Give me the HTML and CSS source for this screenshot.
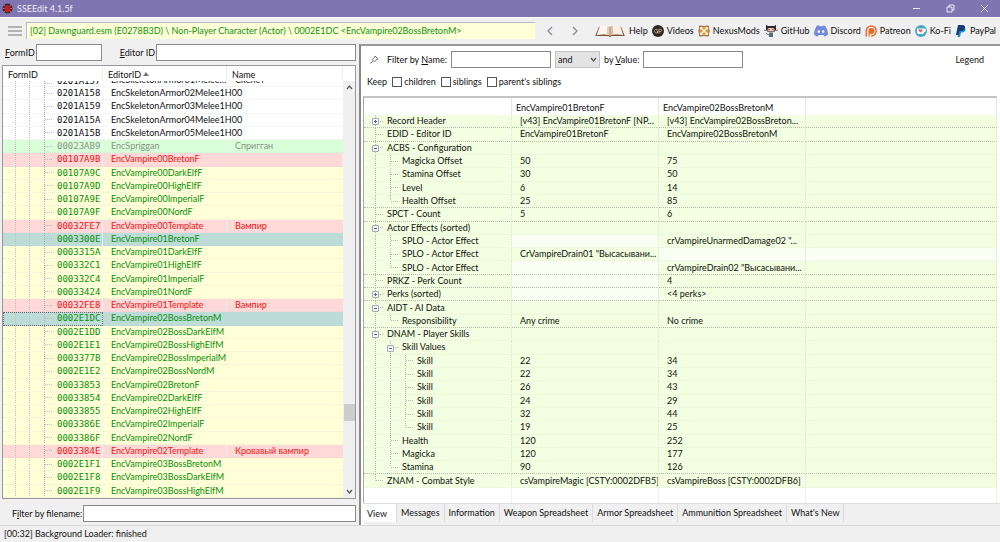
FILE: index.html
```html
<!DOCTYPE html>
<html lang="en">
<head>
<meta charset="utf-8">
<title>SSEEdit 4.1.5f</title>
<link rel="stylesheet" href="styles.css">
</head>
<body>
<header class="titlebar">
  <svg class="app-icon" viewBox="0 0 12 12"><circle cx="6" cy="6" r="5.5" fill="#3a2a30"/><path d="M2 2l2 2M10 2L8 4M1 6h2M11 6H9M2 10l2-2M10 10L8 8" stroke="#b9a5a5" stroke-width=".8"/><path d="M6 2l2 1.500 1 2.500-1 3-2 1.500L4 9 3 6l1-2.500z" fill="#d8141c"/></svg>
  <span class="app-title">SSEEdit 4.1.5f</span>
  <div class="win-buttons">
    <button aria-label="Minimize"><svg viewBox="0 0 9 9"><path d="M1 4.500h7"/></svg></button>
    <button aria-label="Restore"><svg viewBox="0 0 9 9"><path d="M1 3h5v5H1zM3 3V1h5v5H6"/></svg></button>
    <button aria-label="Close"><svg viewBox="0 0 9 9"><path d="M1 1l7 7M8 1L1 8"/></svg></button>
  </div>
</header>

<nav class="toolbar">
  <button class="menu" aria-label="Menu"><svg viewBox="0 0 14 10"><path d="M0 1h14M0 5h14M0 9h14" stroke="#777" stroke-width="1.200"/></svg></button>
  <input class="path" aria-label="Path" readonly value="[02] Dawnguard.esm (E0278B3D) \ Non-Player Character (Actor) \ 0002E1DC &lt;EncVampire02BossBretonM&gt;">
  <div class="history">
    <button aria-label="Back"><svg viewBox="0 0 6 10"><path d="M5 1L1 5l4 4"/></svg></button>
    <button aria-label="Forward"><svg viewBox="0 0 6 10"><path d="M1 1l4 4-4 4"/></svg></button>
  </div>
  <div class="links">
    <a href="#"><svg class="book" viewBox="0 0 32 13"><path d="M4 2L0 12h14l2 1 2-1h14L28 2z" fill="#7d5138"/><path d="M5 1c4-1.200 8-1 11 1v9.500C12 10 6 10 1.500 11z" fill="#fbf5ee"/><path d="M27 1c-4-1.200-8-1-11 1v9.500c4-1.500 10-1.500 14.500-.5z" fill="#f7eee4"/><path d="M13 .8c1.500.2 2.300.6 3 1.200v9.500c-1-.6-2-.9-3.500-1z" fill="#e3cdb9"/><path d="M19 .8c-1.500.2-2.300.6-3 1.200v9.500c1-.6 2-.9 3.500-1z" fill="#d9bfa8"/><path d="M16 2v10" stroke="#a98468" stroke-width=".8"/></svg>Help</a>
    <a href="#"><svg viewBox="0 0 12 12"><circle cx="6" cy="6" r="6" fill="#2f2925"/><path d="M5.500 4.300H3.800L2.500 5.500v1.200l1.200 1.200h1.800V6H4.400M7 8.500V4.200h1.800l.9.900v.7l-.9.900H7" fill="none" stroke="#c3b48c" stroke-width=".9"/></svg>Videos</a>
    <a href="#"><svg viewBox="0 0 12 12"><path d="M1 1l2-.5L6 1l3-.5 2 .5v2l.5 3-.5 3v2l-2 .5-3-.5-3 .5-2-.5V9L.5 6 1 3z" fill="#6f6254"/><rect x="1.500" y="1.500" width="9" height="9" rx="1.500" fill="#eb962f"/><path d="M3 3l6 6M9 3L3 9" stroke="#fff" stroke-width="1.400"/><path d="M2.300 4.500V2.300h2.200M7.500 2.300h2.200v2.200M9.700 7.500v2.200H7.500M4.500 9.700H2.300V7.500" fill="none" stroke="#fff" stroke-width=".8"/></svg>NexusMods</a>
    <a href="#"><svg class="wide" viewBox="0 0 14 12"><path d="M2 0l2 1h6l2-1v5l-2 2H4L2 5z" fill="#2b2b2d"/><rect x="3.500" y="3" width="7" height="3.500" rx="1.500" fill="#e9c3ae"/><path d="M5 4v1.200M9 4v1.200" stroke="#5d3b34"/><path d="M5 7.500h4V12H5z" fill="#566f7b"/><path d="M5 10L3 9 2 8M0 5l2 .5M14 5l-2 .5" fill="none" stroke="#777"/></svg>GitHub</a>
    <a href="#"><svg class="wide" viewBox="0 0 14 11"><path d="M3 0l2-.1.500.9h3L9 0l2 .3C13 3 14 6 14 9c-1 1-2 1.600-3.500 2l-1-1.500h-5L3.500 11C2 10.600 1 10 0 9 0 6 1 3 3 0z" fill="#7289da"/><ellipse cx="4.800" cy="6" rx="1.300" ry="1.500" fill="#f0f0f0"/><ellipse cx="9.200" cy="6" rx="1.300" ry="1.500" fill="#f0f0f0"/></svg>Discord</a>
    <a href="#"><svg viewBox="0 0 12 12"><path d="M1.200 11.500V6a5 5 0 1 1 5 5" fill="none" stroke="#f4621f" stroke-width="1.400"/><path d="M3.500 11.500V6a2.900 2.900 0 1 1 2.900 2.900L4.700 8.400v3.100z" fill="#f4621f"/></svg>Patreon</a>
    <a href="#"><svg viewBox="0 0 12 12"><circle cx="6" cy="6" r="6" fill="#4aa7c4"/><path d="M2 3.500h7.500c2 0 2 3.500-.2 3.500-.3 1.500-1 2-2 2H4C2.500 9 2 8 2 7z" fill="#fff"/><path d="M5.500 7.500L3.600 5.700c-.8-1.500 1.200-2 1.900-.8.700-1.200 2.700-.7 1.900.8z" fill="#f1545b"/></svg>Ko-Fi</a>
    <a href="#"><svg viewBox="0 0 12 12"><path d="M4 2h5c2.500 1 2 5.500-2 5.500H6L5 12H2.500z" fill="#1b93d2"/><path d="M3 0h4.500c4 0 3.300 6-1.200 6H4.500l-.9 4H1z" fill="#173a78"/></svg>PayPal</a>
  </div>
</nav>

<main class="panes">
  <section class="left">
    <form class="search">
      <label for="formid"><u>F</u>ormID</label><input id="formid" class="box formid" type="text">
      <label for="edid" class="edid-label"><u>E</u>ditor ID</label><input id="edid" class="box grow" type="text">
    </form>
    <div class="records">
      <table class="list">
        <colgroup><col class="c-id"><col class="c-edid"><col></colgroup>
        <thead><tr><th>FormID</th><th>EditorID <svg class="sort" viewBox="0 0 6 4"><path d="M0 4l3-4 3 4z" fill="#777"/></svg></th><th>Name</th></tr></thead>
        <tbody>
          <tr class="cut"><td><div>0201A157</div></td><td><div>EncSkeletonArmor01Melee…</div></td><td><div>Скелет</div></td></tr>
          <tr><td>0201A158</td><td colspan="2">EncSkeletonArmor02Melee1H00</td></tr>
          <tr><td>0201A159</td><td colspan="2">EncSkeletonArmor03Melee1H00</td></tr>
          <tr><td>0201A15A</td><td colspan="2">EncSkeletonArmor04Melee1H00</td></tr>
          <tr><td>0201A15B</td><td colspan="2">EncSkeletonArmor05Melee1H00</td></tr>
          <tr class="added"><td>00023AB9</td><td>EncSpriggan</td><td>Спригган</td></tr>
          <tr class="conflict"><td>00107A9B</td><td colspan="2">EncVampire00BretonF</td></tr>
          <tr class="over"><td>00107A9C</td><td colspan="2">EncVampire00DarkElfF</td></tr>
          <tr class="over"><td>00107A9D</td><td colspan="2">EncVampire00HighElfF</td></tr>
          <tr class="over"><td>00107A9E</td><td colspan="2">EncVampire00ImperialF</td></tr>
          <tr class="over"><td>00107A9F</td><td colspan="2">EncVampire00NordF</td></tr>
          <tr class="conflict"><td>00032FE7</td><td>EncVampire00Template</td><td>Вампир</td></tr>
          <tr class="over picked"><td>0003300E</td><td colspan="2">EncVampire01BretonF</td></tr>
          <tr class="over"><td>0003315A</td><td colspan="2">EncVampire01DarkElfF</td></tr>
          <tr class="over"><td>000332C1</td><td colspan="2">EncVampire01HighElfF</td></tr>
          <tr class="over"><td>000332C4</td><td colspan="2">EncVampire01ImperialF</td></tr>
          <tr class="over"><td>00033424</td><td colspan="2">EncVampire01NordF</td></tr>
          <tr class="conflict"><td>00032FE8</td><td>EncVampire01Template</td><td>Вампир</td></tr>
          <tr class="over picked focus"><td>0002E1DC</td><td colspan="2">EncVampire02BossBretonM</td></tr>
          <tr class="over"><td>0002E1DD</td><td colspan="2">EncVampire02BossDarkElfM</td></tr>
          <tr class="over"><td>0002E1E1</td><td colspan="2">EncVampire02BossHighElfM</td></tr>
          <tr class="over"><td>0003377B</td><td colspan="2">EncVampire02BossImperialM</td></tr>
          <tr class="over"><td>0002E1E2</td><td colspan="2">EncVampire02BossNordM</td></tr>
          <tr class="over"><td>00033853</td><td colspan="2">EncVampire02BretonF</td></tr>
          <tr class="over"><td>00033854</td><td colspan="2">EncVampire02DarkElfF</td></tr>
          <tr class="over"><td>00033855</td><td colspan="2">EncVampire02HighElfF</td></tr>
          <tr class="over"><td>0003386E</td><td colspan="2">EncVampire02ImperialF</td></tr>
          <tr class="over"><td>0003386F</td><td colspan="2">EncVampire02NordF</td></tr>
          <tr class="conflict"><td>0003384E</td><td>EncVampire02Template</td><td>Кровавый вампир</td></tr>
          <tr class="over"><td>0002E1F1</td><td colspan="2">EncVampire03BossBretonM</td></tr>
          <tr class="over"><td>0002E1F8</td><td colspan="2">EncVampire03BossDarkElfM</td></tr>
          <tr class="over"><td>0002E1F9</td><td colspan="2">EncVampire03BossHighElfM</td></tr>
        </tbody>
      </table>
      <div class="scrollbar">
        <svg viewBox="0 0 7 5"><path d="M1 4l2.500-3L6 4"/></svg>
        <span class="space-above"></span><span class="thumb"></span><span class="space-below"></span>
        <svg viewBox="0 0 7 5"><path d="M1 1l2.500 3L6 1"/></svg>
      </div>
    </div>
    <form class="filename">
      <label for="fname">F<u>i</u>lter by filename:</label><input id="fname" class="box grow" type="text">
    </form>
  </section>

  <section class="right">
    <form class="filters">
      <div class="filter-row">
        <svg class="pin" viewBox="0 0 9 9"><path d="M5 1l3 3-1.500.5L5 6.500 4.500 7 2 4.500 2.500 4l2-1.500zM3 6L.5 8.500" fill="none" stroke="#666" stroke-width=".9"/></svg>
        <label for="byname">Filter by <u>N</u>ame:</label><input id="byname" class="box medium" type="text">
        <span class="combo"><select aria-label="Operator"><option>and</option></select><svg viewBox="0 0 7 5"><path d="M1 1l2.500 3L6 1"/></svg></span>
        <label for="byvalue">by <u>V</u>alue:</label><input id="byvalue" class="box medium" type="text">
        <span class="legend">Legend</span>
      </div>
      <div class="keep-row">
        <span>Keep</span>
        <label><input type="checkbox">children</label>
        <label><input type="checkbox">siblings</label>
        <label><input type="checkbox">parent's siblings</label>
      </div>
    </form>
    <div class="view">
      <table class="tree">
        <colgroup><col class="c-label"><col class="c-val"><col class="c-val"><col></colgroup>
        <thead><tr><th></th><th>EncVampire01BretonF</th><th>EncVampire02BossBretonM</th><th></th></tr></thead>
        <tbody>
          <tr class="sep"><td class="l0"><button class="x plus" aria-label="Expand"></button>Record Header</td><td>[v43] EncVampire01BretonF [NP...</td><td>[v43] EncVampire02BossBreton...</td><td></td></tr>
          <tr class="sep"><td class="l0"><i class="x"></i>EDID - Editor ID</td><td>EncVampire01BretonF</td><td>EncVampire02BossBretonM</td><td></td></tr>
          <tr><td class="l0"><button class="x" aria-label="Collapse"></button>ACBS - Configuration</td><td></td><td></td><td></td></tr>
          <tr><td class="l1"><i class="x"></i>Magicka Offset</td><td>50</td><td>75</td><td></td></tr>
          <tr><td class="l1"><i class="x"></i>Stamina Offset</td><td>30</td><td>50</td><td></td></tr>
          <tr><td class="l1"><i class="x"></i>Level</td><td>6</td><td>14</td><td></td></tr>
          <tr class="sep"><td class="l1 end"><i class="x"></i>Health Offset</td><td>25</td><td>85</td><td></td></tr>
          <tr class="sep"><td class="l0"><i class="x"></i>SPCT - Count</td><td>5</td><td>6</td><td></td></tr>
          <tr><td class="l0"><button class="x" aria-label="Collapse"></button>Actor Effects (sorted)</td><td></td><td></td><td></td></tr>
          <tr><td class="l1"><i class="x"></i>SPLO - Actor Effect</td><td class="none"></td><td>crVampireUnarmedDamage02 "...</td><td></td></tr>
          <tr><td class="l1"><i class="x"></i>SPLO - Actor Effect</td><td>CrVampireDrain01 "Высасывани...</td><td class="none"></td><td class="none"></td></tr>
          <tr class="sep"><td class="l1 end"><i class="x"></i>SPLO - Actor Effect</td><td class="none"></td><td>crVampireDrain02 "Высасывани...</td><td></td></tr>
          <tr class="sep"><td class="l0"><i class="x"></i>PRKZ - Perk Count</td><td class="none"></td><td>4</td><td></td></tr>
          <tr class="sep"><td class="l0"><button class="x plus" aria-label="Expand"></button>Perks (sorted)</td><td class="none"></td><td>&lt;4 perks&gt;</td><td></td></tr>
          <tr><td class="l0"><button class="x" aria-label="Collapse"></button>AIDT - AI Data</td><td></td><td></td><td></td></tr>
          <tr class="sep"><td class="l1 end"><i class="x"></i>Responsibility</td><td>Any crime</td><td>No crime</td><td></td></tr>
          <tr><td class="l0"><button class="x" aria-label="Collapse"></button>DNAM - Player Skills</td><td></td><td></td><td></td></tr>
          <tr><td class="l1"><button class="x" aria-label="Collapse"></button>Skill Values</td><td></td><td></td><td></td></tr>
          <tr><td class="l2"><i class="x"></i>Skill</td><td>22</td><td>34</td><td></td></tr>
          <tr><td class="l2"><i class="x"></i>Skill</td><td>22</td><td>34</td><td></td></tr>
          <tr><td class="l2"><i class="x"></i>Skill</td><td>26</td><td>43</td><td></td></tr>
          <tr><td class="l2"><i class="x"></i>Skill</td><td>24</td><td>29</td><td></td></tr>
          <tr><td class="l2"><i class="x"></i>Skill</td><td>32</td><td>44</td><td></td></tr>
          <tr><td class="l2 end"><i class="x"></i>Skill</td><td>19</td><td>25</td><td></td></tr>
          <tr><td class="l1"><i class="x"></i>Health</td><td>120</td><td>252</td><td></td></tr>
          <tr><td class="l1"><i class="x"></i>Magicka</td><td>120</td><td>177</td><td></td></tr>
          <tr class="sep"><td class="l1 end"><i class="x"></i>Stamina</td><td>90</td><td>126</td><td></td></tr>
          <tr><td class="l0 end"><i class="x"></i>ZNAM - Combat Style</td><td>csVampireMagic [CSTY:0002DFB5]</td><td>csVampireBoss [CSTY:0002DFB6]</td><td></td></tr>
        </tbody>
        <tfoot><tr><td></td><td></td><td></td><td></td></tr></tfoot>
      </table>
    </div>
    <div class="tabs" role="tablist">
      <button class="tab active" role="tab" aria-selected="true">View</button>
      <button class="tab" role="tab">Messages</button>
      <button class="tab" role="tab">Information</button>
      <button class="tab" role="tab">Weapon Spreadsheet</button>
      <button class="tab" role="tab">Armor Spreadsheet</button>
      <button class="tab" role="tab">Ammunition Spreadsheet</button>
      <button class="tab" role="tab">What's New</button>
    </div>
  </section>
</main>
<footer class="status">[00:32] Background Loader: finished</footer>
</body>
</html>
```
FILE: styles.css
```css
* { box-sizing: border-box; }
body {
  margin: 0;
  height: 100vh;
  display: flex;
  flex-direction: column;
  overflow: hidden;
  background: #f0f0f0;
  color: #111;
  font: 9px/12px Lato, "Open Sans", sans-serif;
}
button, input, select { font: inherit; color: inherit; margin: 0; }
button { border: 0; background: none; padding: 0; }
svg { display: block; flex: none; }
label, span, a { white-space: nowrap; }

.titlebar {
  height: 17px;
  display: flex;
  align-items: center;
  gap: 4px;
  padding: 0 11px 0 2px;
  background: #7f75b1;
  color: #eeeaf8;
}
.app-icon { width: 11px; height: 11px; }
.win-buttons { margin-left: auto; display: flex; gap: 25px; }
.win-buttons svg { width: 9px; height: 9px; fill: none; stroke: #eceaf6; stroke-width: 1; }

.toolbar {
  height: 27px;
  display: flex;
  align-items: center;
  padding: 0 4px 0 8px;
  border-top: 1px solid #fff;
}
.menu { margin-right: 4px; }
.menu svg { width: 14px; height: 10px; }
.path {
  flex: 1;
  min-width: 0;
  height: 17px;
  margin-bottom: 2px;
  padding: 0 3px;
  border: 0;
  border-top: 1px solid #bbb;
  border-left: 1px solid #bbb;
  background: #ffffd8;
  color: #0f930f;
}
.history { display: flex; gap: 19px; padding: 0 16px 0 12px; }
.history svg { width: 6px; height: 10px; fill: none; stroke: #8a8595; stroke-width: 1.2; }
.links { display: flex; gap: 4px; }
.links a { display: flex; align-items: center; gap: 3px; color: inherit; text-decoration: none; }
.links svg { width: 12px; height: 12px; }
.links .book { width: 32px; }
.links .wide { width: 14px; }

.panes { flex: 1; min-height: 0; display: flex; }
.box {
  height: 17px;
  min-width: 0;
  padding: 0 3px;
  border: 1px solid #8a8a8a;
  border-radius: 0;
  background: #fff;
}
.grow { flex: 1; }

.left { width: 359px; flex: none; display: flex; flex-direction: column; padding: 0 3px 3px 2px; }
.search { display: flex; align-items: center; gap: 1px; padding-left: 3px; }
.formid { width: 66px; }
.edid-label { margin-left: 17px; }
.records {
  flex: 1;
  min-height: 0;
  display: flex;
  margin: 4px 0 6px;
  border: 1px solid #999;
  background: #fff;
}
table { border-collapse: separate; border-spacing: 0; table-layout: fixed; height: 100%; }
td, th { padding: 0; font-weight: normal; text-align: left; white-space: nowrap; }
.list { flex: 1; width: 0; }
.c-id { width: 100px; }
.c-edid { width: 124px; }
.list thead tr { height: 15px; }
.list th { height: 15px; padding: 2px 0 0 5px; border-right: 1px solid #eee; }
.sort { display: inline-block; width: 6px; height: 4px; vertical-align: 2px; }
.list td { padding-left: 8px; border-bottom: 1px dotted rgba(190, 200, 210, .3); }
.list td:first-child {
  padding-left: 54px;
  border-right: 1px solid rgba(255, 255, 255, .6);
  font: 9px/10px "DejaVu Sans Mono", monospace;
  background-image:
    repeating-linear-gradient(#c0c0c0 0 1px, transparent 1px 2px),
    repeating-linear-gradient(#c0c0c0 0 1px, transparent 1px 2px),
    repeating-linear-gradient(#aaa 0 1px, transparent 1px 2px),
    repeating-linear-gradient(90deg, #bbb 0 1px, transparent 1px 2px);
  background-position: 12px 0, 26px 0, 41px 0, 42px 50%;
  background-size: 1px 100%, 1px 100%, 1px 100%, 8px 1px;
  background-repeat: no-repeat;
}
.list .cut, .list .cut td { height: 6px; }
.cut div { height: 5px; display: flex; align-items: flex-end; overflow: hidden; }
.over { background: #ffffd8; color: #0a8f0a; }
.conflict { background: #ffd8d8; color: #f41414; }
.added { background: #d8ffd8; color: #8a938a; }
.conflict td:nth-child(2), .added td:nth-child(2) { border-right: 1px solid rgba(255, 255, 255, .5); }
.picked { background: #bddcd8; }
.list .focus td:first-child { outline: 1px dotted #666; outline-offset: -1px; }

.scrollbar {
  width: 12px;
  margin-top: 15px;
  display: flex;
  flex-direction: column;
  align-items: center;
  padding: 4px 0;
  background: #f0f0f0;
}
.scrollbar svg { width: 7px; height: 5px; }
.scrollbar path, .combo path { fill: none; stroke: #555; stroke-width: 1.2; }
.space-above { flex: 312; }
.space-below { flex: 67; }
.thumb { width: 11px; height: 17px; background: #cdcdcd; }
.filename { display: flex; align-items: center; gap: 1px; padding-left: 10px; }

.right {
  flex: 1;
  min-width: 0;
  display: flex;
  flex-direction: column;
  padding: 0 0 0 2px;
  border-left: 2px solid #888;
  border-top: 2px solid #999;
  background: #fff;
}
.filters { padding: 5px 16px 0 4px; }
.filter-row { display: flex; align-items: center; padding-left: 3px; gap: 4px; }
.pin { width: 9px; height: 9px; margin-right: 4px; }
.medium { width: 100px; }
.combo { display: grid; align-items: center; }
.combo select, .combo svg { grid-area: 1 / 1; }
.combo select {
  width: 45px;
  height: 17px;
  appearance: none;
  padding: 0 2px;
  border: 1px solid #c4c4c4;
  border-radius: 0;
  background: #e3e3e3;
}
.combo svg { width: 7px; height: 5px; justify-self: end; margin-right: 3px; pointer-events: none; }
.legend { margin-left: auto; }
.keep-row { display: flex; align-items: center; gap: 5px; height: 28px; }
.keep-row label { display: flex; align-items: center; gap: 2px; }
.keep-row input {
  appearance: none;
  width: 10px;
  height: 10px;
  border: 1px solid #555;
  background: #fff;
}
.view {
  flex: 1;
  min-height: 0;
  margin-right: 3px;
  border-top: 2px solid #c4c4c4;
  border-left: 1px solid #aaa;
}
.tree { width: 100%; }
.c-label { width: 148px; }
.c-val { width: 147px; }
.tree thead tr, .tree th { height: 17px; }
.tree th { padding: 2px 0 0 4px; border-right: 1px solid #e6e6e6; }
.tree td {
  overflow: hidden;
  padding-left: 8px;
  border-bottom: 1px dotted #e9f3dc;
  border-right: 1px dotted #dde4d4;
  background-color: #f2ffe0;
}
.tree .sep td { border-bottom: 1px dotted #b4bcaa; }
.tree td.none { background-color: #f9fff2; }
.tree tfoot tr, .tree tfoot td { height: 15px; }
.tree tfoot td { background: #fff; border-bottom: 0; }
.tree td:first-child {
  background-repeat: no-repeat;
  --v: repeating-linear-gradient(#b4b4b4 0 1px, transparent 1px 2px);
  --h: repeating-linear-gradient(90deg, #b4b4b4 0 1px, transparent 1px 2px);
  --last: 100%;
}
.tree td.end { --last: 50%; }
.tree td.l0 {
  background-image: var(--v), var(--h);
  background-position: 11px 0, 12px 50%;
  background-size: 1px var(--last), 8px 1px;
}
.tree td.l1 {
  padding-left: 23px;
  background-image: var(--v), var(--v), var(--h);
  background-position: 11px 0, 26px 0, 27px 50%;
  background-size: 1px 100%, 1px var(--last), 8px 1px;
}
.tree td.l2 {
  padding-left: 38px;
  background-image: var(--v), var(--v), var(--v), var(--h);
  background-position: 11px 0, 26px 0, 41px 0, 42px 50%;
  background-size: 1px 100%, 1px 100%, 1px var(--last), 8px 1px;
}
.x { display: inline-block; width: 7px; height: 7px; margin-right: 8px; vertical-align: middle; }
button.x {
  border: 1px solid #a3a9b5;
  border-radius: 1px;
  background: linear-gradient(#4664b0, #4664b0) center / 3px 1px no-repeat, #f4f6fa;
}
button.plus {
  background: linear-gradient(#4664b0, #4664b0) center / 3px 1px no-repeat, linear-gradient(#4664b0, #4664b0) center / 1px 3px no-repeat, #f4f6fa;
}

.tabs { display: flex; height: 22px; padding-bottom: 3px; background: #f0f0f0; border-top: 1px solid #ddd; }
.tab { padding: 0 4px; border-right: 1px solid #dcdcdc; white-space: nowrap; }
.tab.active { padding: 2px 9px 0 4px; background: #fff; }
.status { height: 17px; padding: 2px 4px; border-top: 1px solid #d8d8d8; }
```
